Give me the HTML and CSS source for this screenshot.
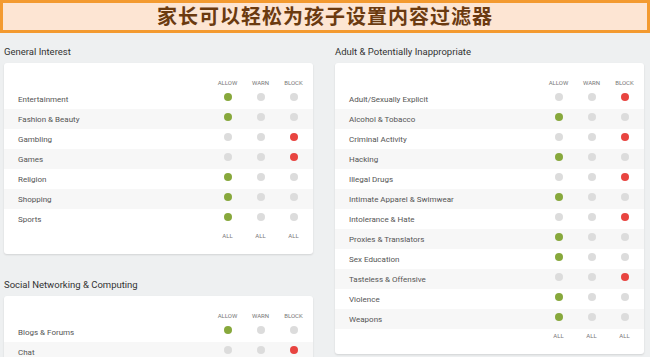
FILE: index.html
```html
<!DOCTYPE html>
<html lang="zh-CN">
<head>
    <meta charset="UTF-8">
    <meta name="viewport" content="width=device-width, initial-scale=1.0">
    <title>内容过滤器</title>
    <link rel="stylesheet" href="styles.css">
</head>
<body>
    <div class="banner">家长可以轻松为孩子设置内容过滤器</div>

    <div class="columns">
        <div class="column">
            <section class="group">
                <h2 class="group-title">General Interest</h2>
                <div class="card">
                    <div class="row head">
                        <span></span><span>ALLOW</span><span>WARN</span><span>BLOCK</span>
                    </div>
                    <div class="row"><span class="label">Entertainment</span><i class="dot allow"></i><i class="dot"></i><i class="dot"></i></div>
                    <div class="row"><span class="label">Fashion &amp; Beauty</span><i class="dot allow"></i><i class="dot"></i><i class="dot"></i></div>
                    <div class="row"><span class="label">Gambling</span><i class="dot"></i><i class="dot"></i><i class="dot block"></i></div>
                    <div class="row"><span class="label">Games</span><i class="dot"></i><i class="dot"></i><i class="dot block"></i></div>
                    <div class="row"><span class="label">Religion</span><i class="dot allow"></i><i class="dot"></i><i class="dot"></i></div>
                    <div class="row"><span class="label">Shopping</span><i class="dot allow"></i><i class="dot"></i><i class="dot"></i></div>
                    <div class="row"><span class="label">Sports</span><i class="dot allow"></i><i class="dot"></i><i class="dot"></i></div>
                    <div class="row foot">
                        <span></span><span>ALL</span><span>ALL</span><span>ALL</span>
                    </div>
                </div>
            </section>

            <section class="group">
                <h2 class="group-title">Social Networking &amp; Computing</h2>
                <div class="card">
                    <div class="row head">
                        <span></span><span>ALLOW</span><span>WARN</span><span>BLOCK</span>
                    </div>
                    <div class="row"><span class="label">Blogs &amp; Forums</span><i class="dot allow"></i><i class="dot"></i><i class="dot"></i></div>
                    <div class="row"><span class="label">Chat</span><i class="dot"></i><i class="dot"></i><i class="dot block"></i></div>
                </div>
            </section>
        </div>

        <div class="column">
            <section class="group">
                <h2 class="group-title">Adult &amp; Potentially Inappropriate</h2>
                <div class="card">
                    <div class="row head">
                        <span></span><span>ALLOW</span><span>WARN</span><span>BLOCK</span>
                    </div>
                    <div class="row"><span class="label">Adult/Sexually Explicit</span><i class="dot"></i><i class="dot"></i><i class="dot block"></i></div>
                    <div class="row"><span class="label">Alcohol &amp; Tobacco</span><i class="dot allow"></i><i class="dot"></i><i class="dot"></i></div>
                    <div class="row"><span class="label">Criminal Activity</span><i class="dot"></i><i class="dot"></i><i class="dot block"></i></div>
                    <div class="row"><span class="label">Hacking</span><i class="dot allow"></i><i class="dot"></i><i class="dot"></i></div>
                    <div class="row"><span class="label">Illegal Drugs</span><i class="dot"></i><i class="dot"></i><i class="dot block"></i></div>
                    <div class="row"><span class="label">Intimate Apparel &amp; Swimwear</span><i class="dot allow"></i><i class="dot"></i><i class="dot"></i></div>
                    <div class="row"><span class="label">Intolerance &amp; Hate</span><i class="dot"></i><i class="dot"></i><i class="dot block"></i></div>
                    <div class="row"><span class="label">Proxies &amp; Translators</span><i class="dot allow"></i><i class="dot"></i><i class="dot"></i></div>
                    <div class="row"><span class="label">Sex Education</span><i class="dot allow"></i><i class="dot"></i><i class="dot"></i></div>
                    <div class="row"><span class="label">Tasteless &amp; Offensive</span><i class="dot"></i><i class="dot"></i><i class="dot block"></i></div>
                    <div class="row"><span class="label">Violence</span><i class="dot allow"></i><i class="dot"></i><i class="dot"></i></div>
                    <div class="row"><span class="label">Weapons</span><i class="dot allow"></i><i class="dot"></i><i class="dot"></i></div>
                    <div class="row foot">
                        <span></span><span>ALL</span><span>ALL</span><span>ALL</span>
                    </div>
                </div>
            </section>
        </div>
    </div>
</body>
</html>
```

FILE: styles.css
```css
* {
    margin: 0;
    padding: 0;
    box-sizing: border-box;
}

body {
    background-color: #eef0f1;
    font-family: Roboto, "Liberation Sans", sans-serif;
    color: #555;
    height: 357px;
    overflow: hidden;
}

.banner {
    height: 33px;
    border: 3px solid #f39a30;
    background-color: #fde5d3;
    color: #6b3a10;
    font-family: "Noto Sans CJK SC", sans-serif;
    font-weight: 700;
    font-size: 20px;
    line-height: 26px;
    letter-spacing: 1px;
    text-align: center;
}

.columns {
    display: grid;
    grid-template-columns: 309px 309px;
    column-gap: 22px;
    padding: 0 6px 0 4px;
}

.group {
    padding-top: 12px;
}

.column .group + .group {
    padding-top: 24px;
}

.group-title {
    font-size: 9.5px;
    font-weight: 400;
    line-height: 14px;
    color: #333;
    margin-bottom: 4px;
}

.card {
    background: white;
    border-radius: 3px;
    box-shadow: 0 1px 2px rgba(0, 0, 0, 0.12);
    padding: 13px 0;
}

.row {
    display: grid;
    grid-template-columns: 1fr 33px 33px 33px;
    padding: 0 3px 0 14px;
    height: 20px;
    align-items: center;
}

.row:nth-child(odd) {
    background-color: #f7f7f7;
}

.row.head,
.row.foot {
    height: 13px;
    background: none;
    font-size: 6px;
    color: #777;
    text-align: center;
}

.row.foot {
    height: 12px;
}

.label {
    font-size: 8px;
    line-height: 20px;
    padding-top: 1px;
}

.dot {
    width: 8px;
    height: 8px;
    border-radius: 50%;
    background-color: #dcdcdc;
    justify-self: center;
    margin-bottom: 5px;
}

.dot.allow {
    background-color: #87a83c;
}

.dot.block {
    background-color: #e84440;
}
```
